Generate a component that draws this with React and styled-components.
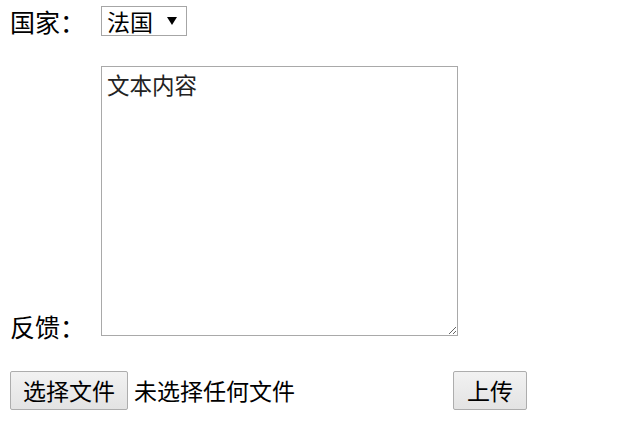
import React, { useState } from "react";
import styled, { createGlobalStyle } from "styled-components";

const GlobalStyle = createGlobalStyle`
  html, body {
    margin: 0;
    padding: 0;
    background: #fff;
  }
  body {
    font-family: "Noto Sans CJK SC", "Liberation Sans", sans-serif;
    color: #000;
  }
`;

export default function App() {
  const [country, setCountry] = useState("fr");
  const [text, setText] = useState("文本内容");

  // 上传表单
  const handleSubmit = (e) => {
    e.preventDefault();
  };

  return (
    <Page>
      <GlobalStyle />
      <Form onSubmit={handleSubmit}>
        <CountryRow>
          <Label>国家：</Label>
          <SelectBox>
            <Select value={country} onChange={(e) => setCountry(e.target.value)}>
              <option value="fr">法国</option>
              <option value="cn">中国</option>
              <option value="us">美国</option>
            </Select>
            <Arrow viewBox="0 0 10 10" aria-hidden="true">
              <path d="M0 1 L10 1 L5 9 Z" fill="#000" />
            </Arrow>
          </SelectBox>
        </CountryRow>

        <FeedbackRow>
          <Label $bottom>反馈：</Label>
          <TextArea value={text} onChange={(e) => setText(e.target.value)} />
        </FeedbackRow>

        <UploadRow>
          <FileBox>
            <HiddenInput id="file" type="file" />
            <FileButton htmlFor="file" $width={118}>选择文件</FileButton>
            <FileName>未选择任何文件</FileName>
          </FileBox>
          <Button type="submit" $width={74}>上传</Button>
        </UploadRow>
      </Form>
    </Page>
  );
}

// Styled Component
const Page = styled.div`
  width: 642px;
  height: 432px;
  padding: 6px 10px 0;
  box-sizing: border-box;
`;

const Form = styled.form`
  display: flex;
  flex-direction: column;
`;

const CountryRow = styled.div`
  display: flex;
  align-items: center;
  height: 30px;
`;

const FeedbackRow = styled.div`
  display: flex;
  align-items: flex-end;
  margin-top: 30px;
`;

const UploadRow = styled.div`
  display: flex;
  align-items: center;
  margin-top: 35px;
`;

const Label = styled.label`
  width: 91px;
  flex: none;
  font-size: 25px;
  line-height: 30px;
  margin-bottom: ${(p) => (p.$bottom ? "-5px" : "0")};
`;

const SelectBox = styled.div`
  position: relative;
  width: 86px;
  height: 30px;
`;

const Select = styled.select`
  appearance: none;
  width: 100%;
  height: 100%;
  box-sizing: border-box;
  border: 1px solid #a6a6a6;
  border-radius: 0;
  background: #fff;
  font-family: "Noto Sans CJK SC", sans-serif;
  font-size: 23px;
  line-height: 28px;
  padding: 0 0 0 5px;
  color: #000;
  outline: 0;
`;

const Arrow = styled.svg`
  position: absolute;
  left: 66px;
  top: 10px;
  width: 10px;
  height: 10px;
  pointer-events: none;
`;

const TextArea = styled.textarea`
  width: 357px;
  height: 270px;
  box-sizing: border-box;
  border: 1px solid #a9a9a9;
  padding: 4px 5px;
  margin: 0;
  font-family: "Noto Sans CJK SC", serif;
  font-size: 22.5px;
  line-height: 26px;
  color: #222;
  outline: 0;
`;

const FileBox = styled.div`
  display: flex;
  align-items: center;
  width: 443px;
`;

const HiddenInput = styled.input`
  display: none;
`;

const Button = styled.button`
  display: inline-block;
  width: ${(p) => p.$width}px;
  height: 39px;
  box-sizing: border-box;
  padding: 0;
  text-align: center;
  border: 1px solid #adadad;
  border-radius: 2px;
  background: linear-gradient(#f2f2f2, #e3e3e3);
  font-family: "Noto Sans CJK SC", sans-serif;
  font-size: 23px;
  line-height: 37px;
  color: #000;
`;

const FileButton = styled(Button).attrs({ as: "label" })``;

const FileName = styled.span`
  margin-left: 6px;
  font-size: 23px;
  line-height: 39px;
`;
